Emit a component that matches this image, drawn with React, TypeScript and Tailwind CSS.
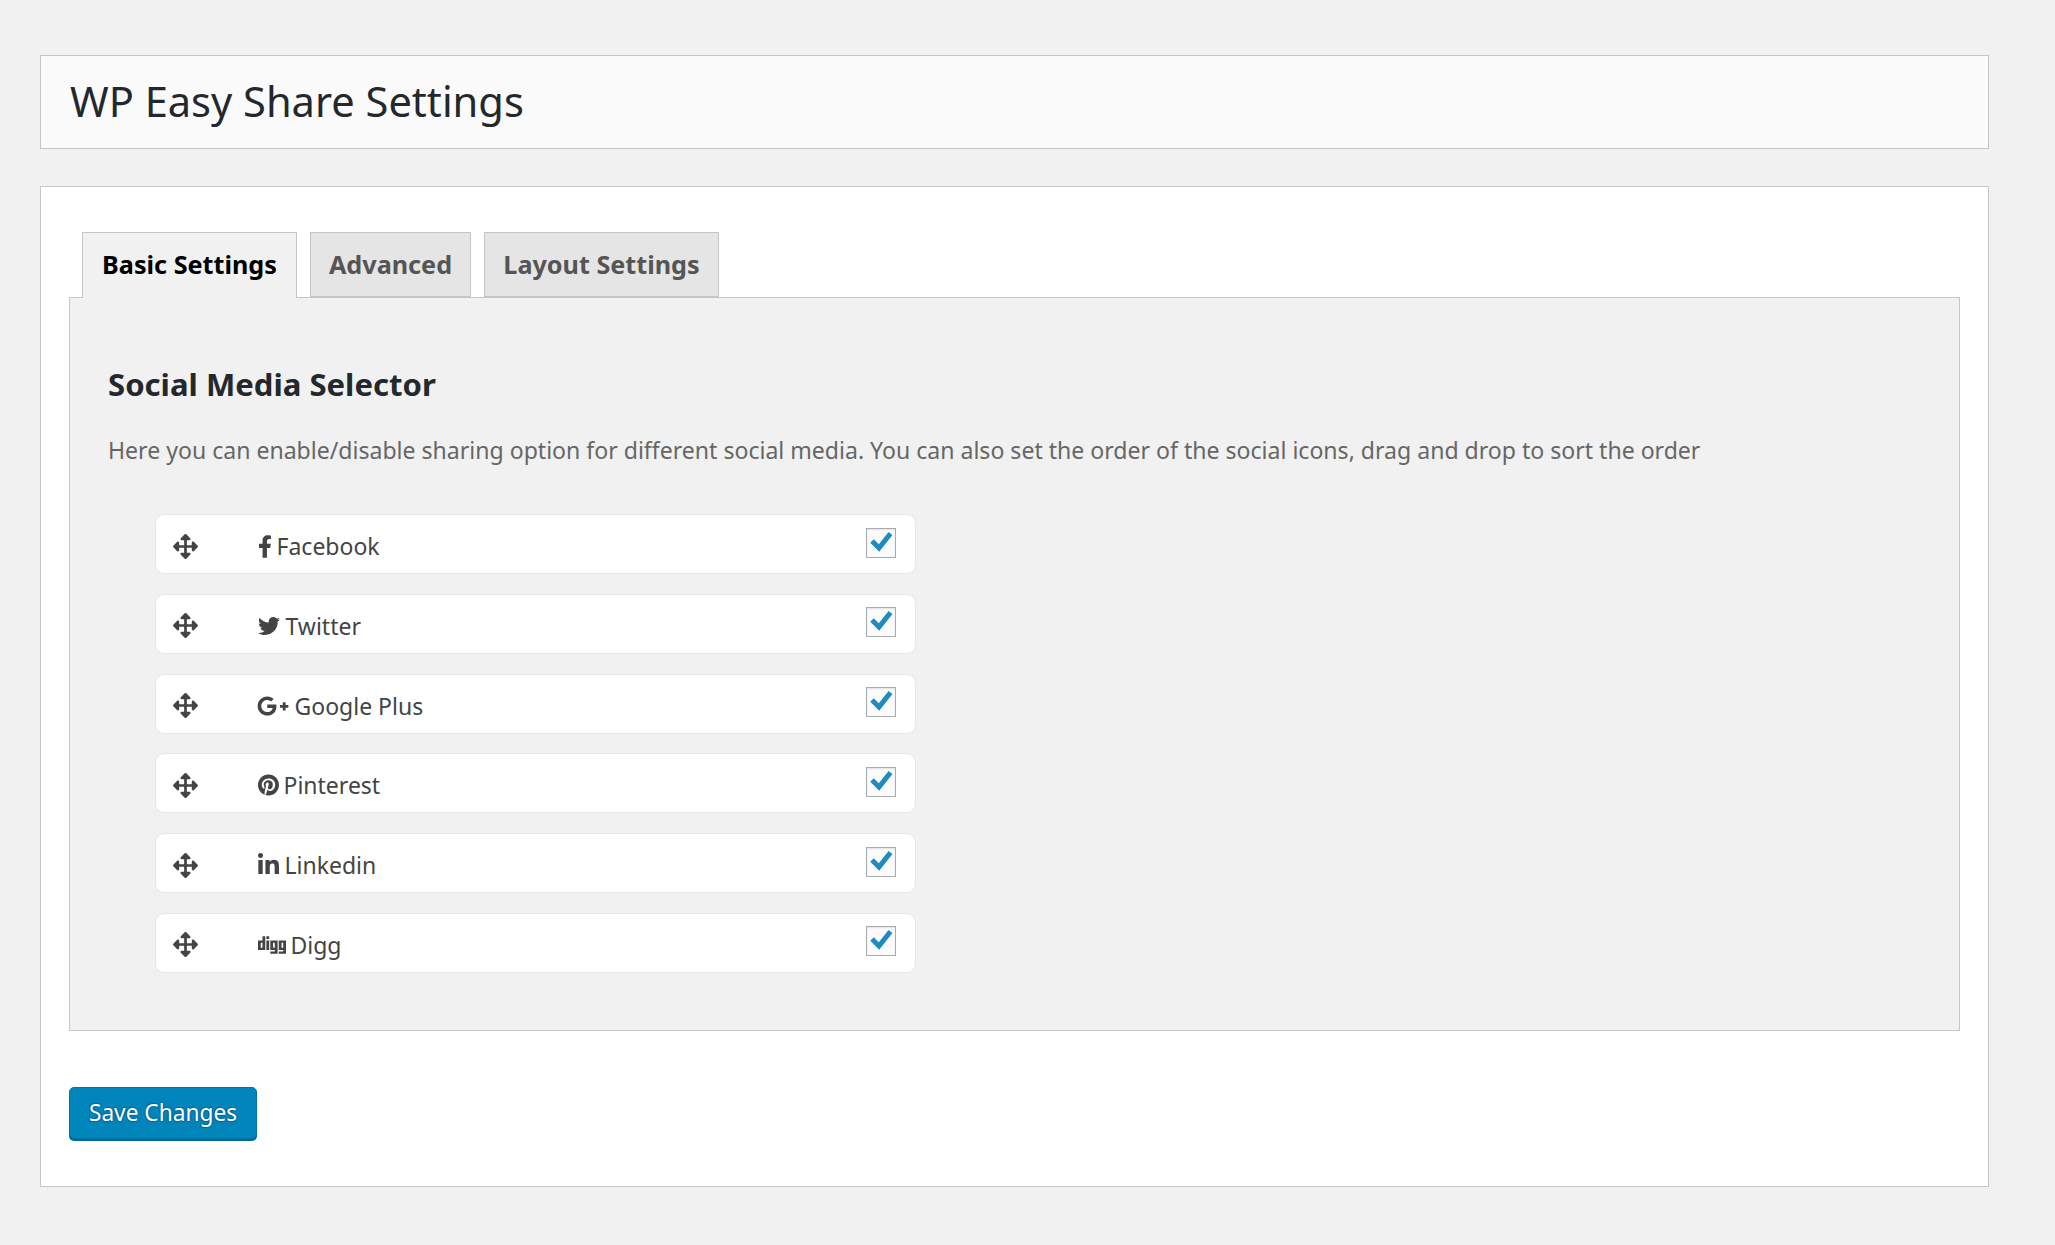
import type { ReactNode } from "react";
import {
  FaArrowsAlt,
  FaDigg,
  FaFacebookF,
  FaGooglePlusG,
  FaLinkedinIn,
  FaPinterest,
  FaTwitter,
} from "react-icons/fa";

type Network = { label: string; icon: ReactNode };

const networks: Network[] = [
  { label: "Facebook", icon: <FaFacebookF className="-mr-[2px] ml-px h-[23px] w-[14px]" /> },
  { label: "Twitter", icon: <FaTwitter className="ml-px -mr-px h-[22px] w-[22px]" /> },
  { label: "Google Plus", icon: <FaGooglePlusG className="-mr-px h-[26px] w-[32px]" /> },
  { label: "Pinterest", icon: <FaPinterest className="ml-px -mr-[2px] h-[22px] w-[21px]" /> },
  { label: "Linkedin", icon: <FaLinkedinIn className="ml-px -mr-px h-[24px] w-[21px]" /> },
  { label: "Digg", icon: <FaDigg className="ml-px -mr-[2px] h-[28px] w-[28px]" /> },
];

function Row({ label, icon }: Network) {
  return (
    <li className="flex h-[60px] items-center rounded-[9px] border border-[#e6e6e6] bg-white pl-[17px] pr-[19px] text-[#444]">
      <FaArrowsAlt className="mt-[4px] h-[25px] w-[25px] shrink-0" />
      <div className="ml-[59px] mt-[4px] flex items-center gap-[6.5px] text-[23px] leading-[30px]">
        {icon}
        <span>{label}</span>
      </div>
      <span className="-mt-[3px] ml-auto flex h-[30px] w-[30px] items-center justify-center border border-[#a8acb0] bg-[#fbfbfb] shadow-[inset_0_1px_2px_rgba(0,0,0,0.1)]">
        <svg viewBox="0 0 30 30" className="h-[30px] w-[30px] shrink-0" fill="none">
          <path d="M6 13l7 7L24.5 5.5" stroke="#1e8cbe" strokeWidth="5" />
        </svg>
      </span>
    </li>
  );
}

export default function App() {
  return (
    <div className="min-h-[1245px] bg-[#f1f1f1] pb-[58px] pl-[40px] pr-[66px] pt-[55px] font-['Noto_Sans',sans-serif] text-[#23282d]">
      <header className="flex h-[94px] items-center border border-[#c6c6c6] bg-[#fafafa] pb-[2px] pl-[29px]">
        <h1 className="text-[41.6px] font-normal leading-[54px]">WP Easy Share Settings</h1>
      </header>

      <main className="mt-[37px] h-[1001px] border border-[#c6c6c6] bg-white px-[28px] pt-[45px]">
        <div className="flex gap-[13px] pl-[13px] text-[25.2px] font-bold leading-[63px]">
          <div className="relative z-10 -mb-[1px] h-[66px] w-[215px] border border-b-0 border-[#c6c6c6] bg-[#f1f1f1] text-center text-black">
            Basic Settings
          </div>
          <div className="h-[65px] w-[161px] border border-[#c6c6c6] bg-[#e5e5e5] text-center text-[#555]">
            Advanced
          </div>
          <div className="h-[65px] w-[235px] border border-[#c6c6c6] bg-[#e5e5e5] text-center text-[#555]">
            Layout Settings
          </div>
        </div>

        <section className="h-[734px] border border-[#c6c6c6] bg-[#f1f1f1] pl-[38px] pt-[66px]">
          <h2 className="text-[31.1px] font-bold leading-[40px]">Social Media Selector</h2>
          <p className="mt-[30px] text-[23.07px] leading-[32px] text-[#666]">
            Here you can enable/disable sharing option for different social media. You can also set the
            order of the social icons, drag and drop to sort the order
          </p>
          <ul className="ml-[47px] mt-[48px] flex w-[761px] flex-col gap-[19.8px]">
            {networks.map((n) => (
              <Row key={n.label} {...n} />
            ))}
          </ul>
        </section>

        <button className="mt-[56px] h-[52px] w-[188px] rounded-[5px] border border-[#0073aa] bg-[#0085ba] text-[22.7px] text-white shadow-[0_2px_0_#006799] [text-shadow:0_-1px_1px_#006799,1px_0_1px_#006799,0_1px_1px_#006799,-1px_0_1px_#006799]">
          Save Changes
        </button>
      </main>
    </div>
  );
}
